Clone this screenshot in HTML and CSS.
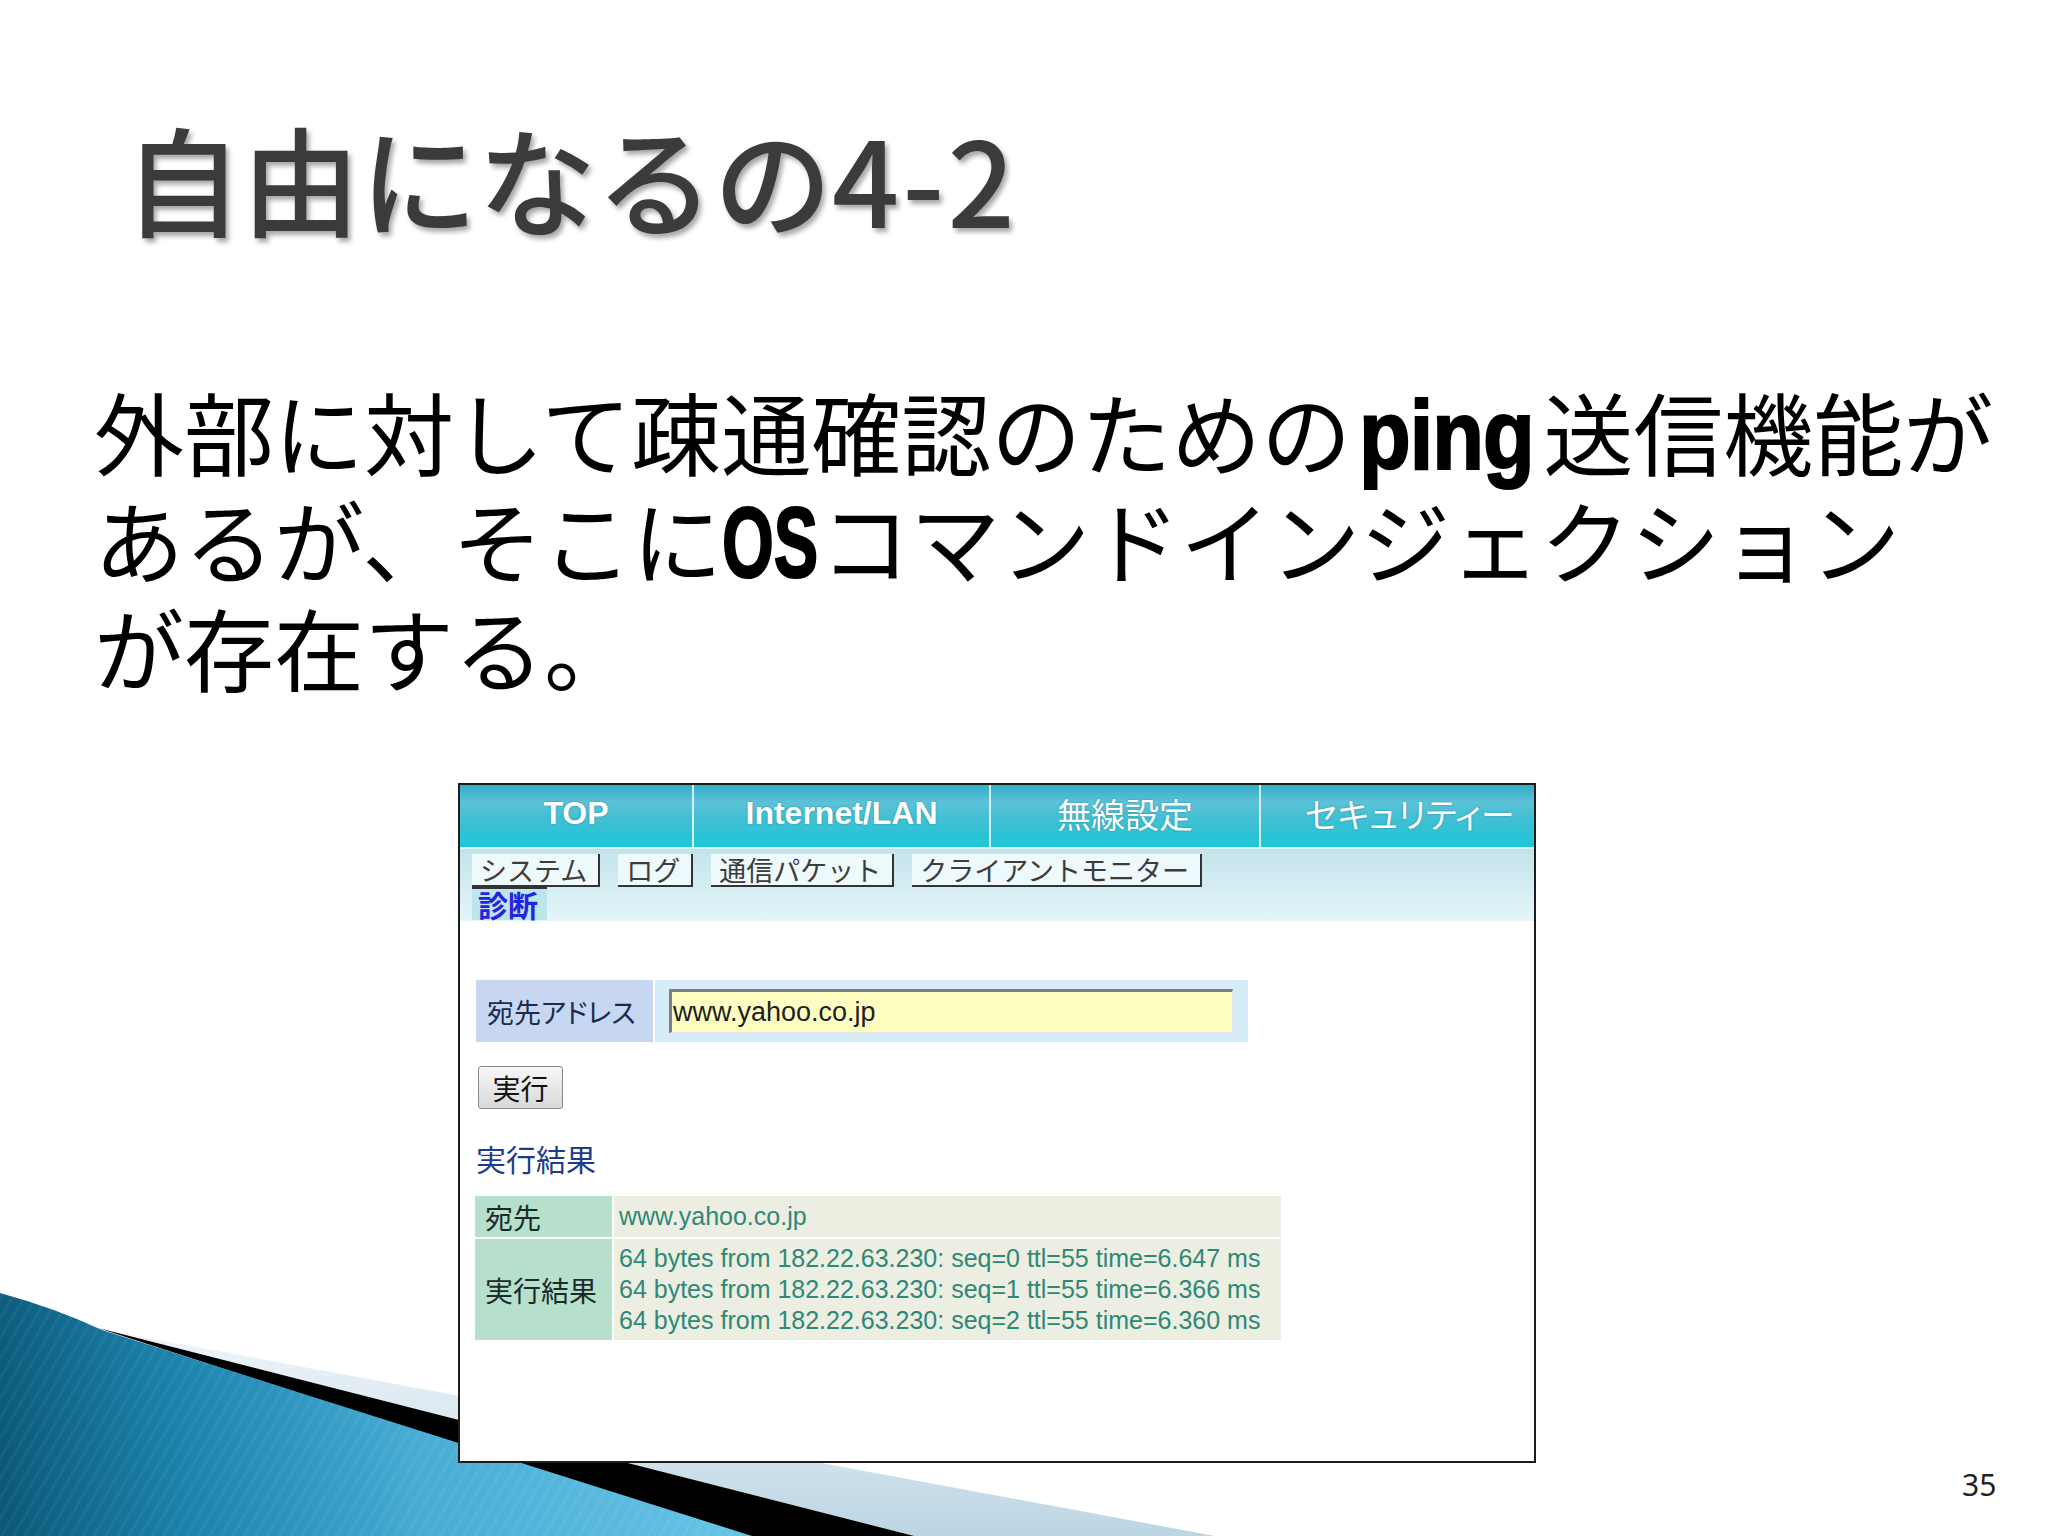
FILE: index.html
```html
<!DOCTYPE html>
<html lang="ja">
<head>
<meta charset="utf-8">
<title>自由になるの4-2</title>
<link rel="stylesheet" href="styles.css">
</head>
<body>
<div class="slide">
  <svg class="deco" width="1300" height="260" viewBox="0 0 1300 260" xmlns="http://www.w3.org/2000/svg">
    <defs>
      <linearGradient id="blueg" gradientUnits="userSpaceOnUse" x1="0" y1="200" x2="760" y2="120">
        <stop offset="0" stop-color="#0b5878"/>
        <stop offset="0.25" stop-color="#1c84ae"/>
        <stop offset="0.55" stop-color="#48acd5"/>
        <stop offset="1" stop-color="#6ac6e6"/>
      </linearGradient>
      <linearGradient id="lightg" gradientUnits="userSpaceOnUse" x1="0" y1="60" x2="0" y2="260">
        <stop offset="0" stop-color="#eef5f9"/>
        <stop offset="1" stop-color="#bcd5e3"/>
      </linearGradient>
      <pattern id="stripes" width="10" height="10" patternUnits="userSpaceOnUse" patternTransform="rotate(30)">
        <rect width="3" height="10" fill="#ffffff" fill-opacity="0.05"/>
      </pattern>
    </defs>
    <path d="M105,54 L1215,260 L900,260 Z" fill="url(#lightg)"/>
    <path d="M98,52 L914,260 L740,260 Z" fill="#000"/>
    <path d="M0,17 Q55,32 102,54 L752,260 L0,260 Z" fill="url(#blueg)"/>
    <path d="M0,17 Q55,32 102,54 L752,260 L0,260 Z" fill="url(#stripes)"/>
  </svg>

  <h1 class="title">自由になるの<span class="num">4-2</span></h1>

  <p class="lead">外部に対して疎通確認のための<b class="latin ping">ping</b>送信機能が<br>あるが、そこに<b class="latin os">OS</b>コマンドインジェクション<br>が存在する。</p>

  <div class="shot">
    <nav class="mainnav">
      <div class="mtab en">TOP</div>
      <div class="mtab en">Internet/LAN</div>
      <div class="mtab jp">無線設定</div>
      <div class="mtab jp last">セキュリティー</div>
    </nav>
    <div class="subnav">
      <div class="subrow">
        <span class="stab">システム</span>
        <span class="stab">ログ</span>
        <span class="stab">通信パケット</span>
        <span class="stab">クライアントモニター</span>
      </div>
      <div class="subrow">
        <span class="stab active">診断</span>
      </div>
    </div>
    <div class="content">
      <div class="form">
        <div class="flabel">宛先アドレス</div>
        <div class="fcell"><div class="input">www.yahoo.co.jp</div></div>
      </div>
      <div class="btn">実行</div>
      <h2 class="rhead">実行結果</h2>
      <div class="rtable">
        <div class="rl">宛先</div>
        <div class="rv one">www.yahoo.co.jp</div>
        <div class="rl">実行結果</div>
        <div class="rv many">64 bytes from 182.22.63.230: seq=0 ttl=55 time=6.647 ms<br>64 bytes from 182.22.63.230: seq=1 ttl=55 time=6.366 ms<br>64 bytes from 182.22.63.230: seq=2 ttl=55 time=6.360 ms</div>
      </div>
    </div>
  </div>

  <div class="pageno">35</div>
</div>
</body>
</html>
```

FILE: styles.css
```css
html, body {
  margin: 0;
  padding: 0;
  background: #fff;
}

body {
  font-family: "Noto Sans CJK JP", "Noto Sans", sans-serif;
}

.slide {
  position: relative;
  width: 2048px;
  height: 1536px;
  box-sizing: border-box;
  padding-top: 118px;
  overflow: hidden;
  background: #fff;
}

.deco {
  position: absolute;
  left: 0;
  bottom: 0;
  z-index: 0;
}

.title {
  position: relative;
  margin: 0 0 0 124px;
  font-size: 118px;
  line-height: 118px;
  font-weight: 500;
  color: #3b3b3b;
  text-shadow: 3px 4px 5px rgba(0, 0, 0, 0.35);
  white-space: nowrap;
}

.title .num {
  letter-spacing: 3px;
}

.lead {
  position: relative;
  margin: 140px 0 0 94px;
  font-size: 90px;
  line-height: 108px;
  font-weight: 400;
  color: #000;
  white-space: nowrap;
}

.latin {
  display: inline-block;
  font-family: "Liberation Sans Narrow", "Liberation Sans", sans-serif;
  font-weight: 700;
  line-height: 90px;
  -webkit-text-stroke: 2px #000;
  transform-origin: 0 80%;
}

.latin.ping {
  letter-spacing: -1px;
  transform: scale(0.94, 1.1);
  margin-right: -2px;
  margin-left: 8px;
}

.latin.os {
  transform: scale(0.74, 1.12);
  margin-right: -32px;
}

/* embedded screenshot */
.shot {
  position: relative;
  z-index: 1;
  margin: 83px 0 0 458px;
  width: 1078px;
  height: 680px;
  box-sizing: border-box;
  border: 2px solid #1c1c1c;
  background: #fff;
  display: flex;
  flex-direction: column;
}

.mainnav {
  display: grid;
  grid-template-columns: 232px 297px 270px 1fr;
  height: 62px;
  border-bottom: 2px solid #dcf2f5;
  background: linear-gradient(#33adc7 0%, #5cc2d8 28%, #40bfd3 55%, #1ec6d8 100%);
}

.mtab {
  display: flex;
  align-items: center;
  justify-content: center;
  padding-bottom: 6px;
  color: #fff;
  text-shadow: 0 0 2px rgba(0, 70, 90, 0.45);
}

.mtab + .mtab {
  border-left: 2px solid #d2eef2;
}

.mtab.en {
  font-family: "Liberation Sans", sans-serif;
  font-weight: 700;
  font-size: 32px;
}

.mtab.jp {
  font-size: 34px;
  font-weight: 400;
  font-feature-settings: "palt";
}

.mtab.last {
  justify-content: flex-start;
  padding-left: 44px;
}

.subnav {
  height: 72px;
  box-sizing: border-box;
  padding: 5px 0 1px 12px;
  background: linear-gradient(#c3e3eb, #e4f6f9);
}

.subrow {
  display: flex;
  gap: 18px;
  height: 33px;
}

.stab {
  background: #eef9fb;
  border-right: 2px solid #333;
  border-bottom: 2px solid #333;
  padding: 0 11px 0 8px;
  font-size: 27px;
  line-height: 31px;
  color: #3c3c3c;
  white-space: nowrap;
}

.stab.active {
  border: none;
  border-top: 2px solid #333;
  background: #bde5ec;
  color: #2424e0;
  font-weight: 700;
  font-size: 30px;
  line-height: 31px;
  padding: 0 9px 0 6px;
}

.content {
  padding: 59px 0 0 16px;
}

.form {
  display: flex;
  gap: 2px;
  width: 772px;
  height: 62px;
}

.flabel {
  width: 177px;
  box-sizing: border-box;
  padding-left: 11px;
  display: flex;
  align-items: center;
  background: #c7d7f1;
  color: #1d2a4c;
  font-size: 27px;
  font-feature-settings: "palt";
  white-space: nowrap;
}

.fcell {
  flex: 1;
  background: #d6edf8;
  padding: 9px 15px 9px 14px;
}

.input {
  height: 44px;
  box-sizing: border-box;
  border-top: 3px solid #7e7e7e;
  border-left: 3px solid #7e7e7e;
  border-right: 1px solid #e6e6e6;
  border-bottom: 1px solid #e6e6e6;
  background: #fdfdc0;
  padding-left: 1px;
  font-family: "Liberation Sans", sans-serif;
  font-size: 27px;
  line-height: 40px;
  color: #1e1e1e;
}

.btn {
  margin: 24px 0 0 2px;
  width: 85px;
  height: 43px;
  box-sizing: border-box;
  border: 1px solid #8a8a8a;
  border-radius: 3px;
  background: linear-gradient(#f7f7f7, #d9d9d9);
  display: flex;
  align-items: center;
  justify-content: center;
  font-size: 28px;
  color: #111;
}

.rhead {
  margin: 31px 0 0 0;
  font-size: 30px;
  line-height: 36px;
  font-weight: 400;
  color: #1e3b8e;
}

.rtable {
  margin: 20px 0 0 -1px;
  width: 806px;
  display: grid;
  grid-template-columns: 137px 1fr;
  gap: 2px;
}

.rl {
  display: flex;
  align-items: center;
  padding-left: 10px;
  background: #b6e0cb;
  color: #1a2c2a;
  font-size: 28px;
  white-space: nowrap;
}

.rv {
  background: #eceee1;
  color: #2e8878;
  font-family: "Liberation Sans", sans-serif;
  font-size: 25px;
  line-height: 31px;
  padding-left: 5px;
  white-space: nowrap;
}

.rv.one {
  padding-top: 5px;
  padding-bottom: 5px;
}

.rv.many {
  padding-top: 4px;
  padding-bottom: 4px;
}

.pageno {
  position: absolute;
  left: 1962px;
  top: 1467px;
  font-family: "Noto Sans", sans-serif;
  font-size: 30px;
  line-height: 36px;
  color: #222;
}
```
